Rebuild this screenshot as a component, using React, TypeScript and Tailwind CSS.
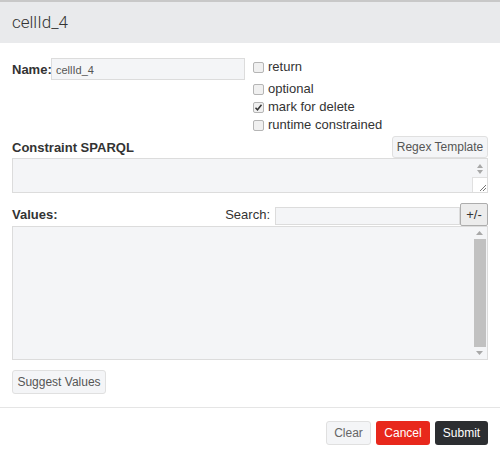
import React from "react";

function Box({ checked }: { checked?: boolean }) {
  return (
    <span className="inline-flex h-[11px] w-[11px] items-center justify-center rounded-[2px] border border-[#b5b5b5] bg-[#f0f0f0]">
      {checked && (
        <svg width="9" height="9" viewBox="0 0 9 9">
          <path d="M1.5 4.8 L3.5 6.8 L7.5 1.8" stroke="#333" strokeWidth="1.5" fill="none" />
        </svg>
      )}
    </span>
  );
}

function Check({ label, checked }: { label: string; checked?: boolean }) {
  return (
    <div className="flex items-center gap-[4px] h-[18px]">
      <Box checked={checked} />
      <span className="text-[13px] text-[#333]">{label}</span>
    </div>
  );
}

export default function App() {
  return (
    <div className="w-[500px] h-[457px] bg-white font-['Liberation_Sans',Arial,sans-serif] text-[#333] overflow-hidden">
      <div className="border-t-2 border-[#c8c8c8] bg-[#e9eaec] h-[43px] flex items-center px-[12px]">
        <span className="font-['Roboto',sans-serif] font-light text-[17px] text-[#333]">cellId_4</span>
      </div>
      <div className="px-[12px] pt-[15px]">
        <div className="flex">
          <div className="flex items-start">
            <span className="font-bold text-[13px] mt-[2px] w-[39px]">Name:</span>
            <div className="w-[194px] h-[22px] bg-[#f4f5f7] border border-[#dcdcdc] flex items-center px-[4px]">
              <span className="text-[11px] text-[#555] mt-[2px]">cellId_4</span>
            </div>
          </div>
          <div className="ml-[8px] flex flex-col">
            <Check label="return" />
            <div className="h-[4px]" />
            <Check label="optional" />
            <Check label="mark for delete" checked />
            <Check label="runtime constrained" />
          </div>
        </div>
        <div className="flex items-end justify-between mt-[2px]">
          <span className="font-bold text-[13px] mb-[1px]">Constraint SPARQL</span>
          <div className="w-[96px] h-[22px] bg-[#f4f5f7] border border-[#e0e0e0] rounded-[3px] flex items-center justify-center text-[12px] text-[#555]">
            Regex Template
          </div>
        </div>
        <div className="h-[35px] bg-[#f4f5f7] border border-[#dcdcdc] flex justify-end">
          <div className="w-[15px] flex flex-col items-center">
            <svg width="10" height="14" viewBox="0 0 10 14" className="mt-[3px]">
              <path d="M2 6 L5 2 L8 6 Z" fill="#a8a8a8" />
              <path d="M2 8 L5 12 L8 8 Z" fill="#a8a8a8" />
            </svg>
            <div className="mt-auto w-[15px] h-[15px] bg-white border-l border-t border-[#e0e0e0] flex items-end justify-end">
              <svg width="10" height="10" viewBox="0 0 10 10">
                <path d="M3 9 L9 3 M6 9 L9 6" stroke="#777" strokeWidth="1" />
              </svg>
            </div>
          </div>
        </div>
        <div className="flex items-center mt-[10px] h-[23px]">
          <span className="font-bold text-[13px]">Values:</span>
          <span className="ml-auto text-[13px] mr-[5px]">Search:</span>
          <div className="w-[185px] h-[18px] bg-[#f4f5f7] border border-[#dcdcdc] mt-[2px]" />
          <div className="w-[28px] h-[23px] bg-[#ececec] border border-[#adadad] rounded-[2px] flex items-center justify-center text-[13px] text-[#333]">
            +/-
          </div>
        </div>
        <div className="h-[134px] bg-[#f4f5f7] border border-[#dcdcdc] flex justify-end">
          <div className="w-[13px] mr-[1px] flex flex-col items-center py-[3px]">
            <svg width="9" height="6" viewBox="0 0 9 6"><path d="M1 5 L4.5 1 L8 5 Z" fill="#a8a8a8" /></svg>
            <div className="flex-1 w-[12px] bg-[#c1c1c1] my-[3px]" />
            <svg width="9" height="6" viewBox="0 0 9 6"><path d="M1 1 L4.5 5 L8 1 Z" fill="#a8a8a8" /></svg>
          </div>
        </div>
        <div className="mt-[10px] w-[94px] h-[24px] bg-[#f4f5f7] border border-[#e0e0e0] rounded-[3px] flex items-center justify-center text-[12px] text-[#555]">
          Suggest Values
        </div>
      </div>
      <div className="mt-[13px] border-t border-[#e5e5e5] flex justify-end gap-[5px] px-[12px] pt-[13px]">
        <div className="w-[45px] h-[24px] bg-[#f4f5f7] border border-[#e0e0e0] rounded-[3px] flex items-center justify-center text-[12px] text-[#666]">
          Clear
        </div>
        <div className="w-[54px] h-[24px] bg-[#e8281c] rounded-[3px] flex items-center justify-center text-[12px] text-white">
          Cancel
        </div>
        <div className="w-[53px] h-[24px] bg-[#2c2e31] rounded-[3px] flex items-center justify-center text-[12px] text-white">
          Submit
        </div>
      </div>
    </div>
  );
}
